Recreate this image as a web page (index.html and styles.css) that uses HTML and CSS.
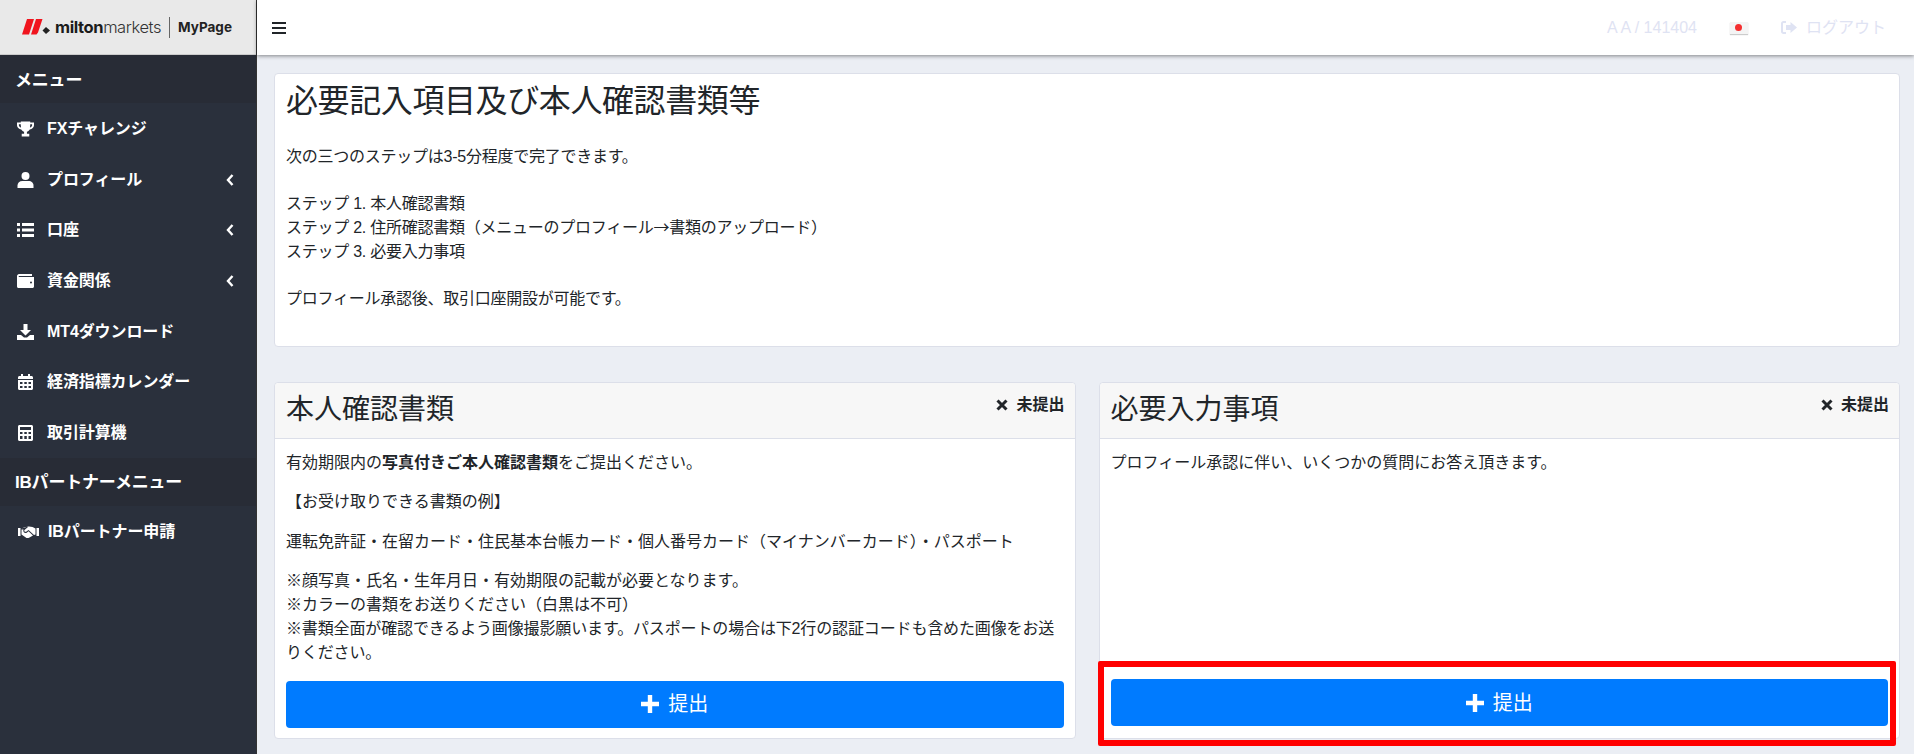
FILE: index.html
```html
<!DOCTYPE html>
<html lang="ja">
<head>
<meta charset="utf-8">
<title>MyPage</title>
<link rel="stylesheet" href="styles.css">
</head>
<body>
<div class="app">
  <aside class="sidebar">
    <div class="brand">
      <svg class="brand-mark" viewBox="0 0 28 16" width="28" height="16"><path fill="#f0141e" d="M5 0h7L7 15.500H0z M14 0h6.500l-4.500 13.500-1.500 2H9z"/><path fill="#222" d="M24 8l4 3.500-4 3.500-3.500-3.500z"/></svg>
      <span class="brand-name"><b>milton</b>markets</span>
      <span class="brand-sep"></span>
      <span class="brand-page">MyPage</span>
    </div>
    <div class="nav-head">メニュー</div>
    <ul class="nav">
      <li class="nav-item"><svg class="ico" viewBox="0 0 18 16"><path d="M4 0h10v1h4v3c0 2.500-2 4-4.500 4.500C12.800 9.800 11.500 10.500 10.500 10.800V13H13v3H5v-3h2.500v-2.200C6.500 10.500 5.200 9.800 4.500 8.500 2 8 0 6.500 0 4V1h4zM2 3v1c0 1 .8 2 2.300 2.500C4.100 5.500 4 4.300 4 3zm14 0h-2c0 1.300-.1 2.500-.3 3.500C15.200 6 16 5 16 4z"/></svg><span>FXチャレンジ</span></li>
      <li class="nav-item"><svg class="ico" viewBox="0 0 16 16"><circle cx="8" cy="4" r="4"/><path d="M5 9h6c3 0 5 2 5 4.500V16H0v-2.500C0 11 2 9 5 9z"/></svg><span>プロフィール</span><svg class="chev" viewBox="0 0 8 12"><path d="M6.500 1L2 6l4.500 5" fill="none" stroke="#fff" stroke-width="2.400"/></svg></li>
      <li class="nav-item"><svg class="ico" viewBox="0 0 17 14"><path d="M0 0h3v3H0zM5 0h12v3H5zM0 5.500h3v3H0zM5 5.500h12v3H5zM0 11h3v3H0zM5 11h12v3H5z"/></svg><span>口座</span><svg class="chev" viewBox="0 0 8 12"><path d="M6.500 1L2 6l4.500 5" fill="none" stroke="#fff" stroke-width="2.400"/></svg></li>
      <li class="nav-item"><svg class="ico" viewBox="0 0 17 14"><path d="M2 0h13v2H2c-.5 0-.5 1 0 1h15v9.500c0 .8-.7 1.500-1.500 1.500h-14C.7 14 0 13.300 0 12.500V2C0 1 1 0 2 0zm12 7.500a1 1 0 100 2 1 1 0 000-2z" fill-rule="evenodd"/></svg><span>資金関係</span><svg class="chev" viewBox="0 0 8 12"><path d="M6.500 1L2 6l4.500 5" fill="none" stroke="#fff" stroke-width="2.400"/></svg></li>
      <li class="nav-item"><svg class="ico" viewBox="0 0 17 16"><path d="M6.500 0h4v6H14l-5.500 5.500L3 6h3.500zM0 11h4l3 2.500h3l3-2.500h4v5H0z"/></svg><span>MT4ダウンロード</span></li>
      <li class="nav-item"><svg class="ico" viewBox="0 0 15 16"><path fill-rule="evenodd" d="M3 0h2v2h5V0h2v2h1.500c.8 0 1.500.7 1.500 1.500V5H0V3.500C0 2.700.7 2 1.500 2H3zM0 6h15v8.500c0 .8-.7 1.500-1.500 1.500h-12C.7 16 0 15.300 0 14.500zm2 2v2h2.500V8zm4.300 0v2h2.500V8zm4.200 0v2H13V8zM2 12v2h2.500v-2zm4.300 0v2h2.500v-2zm4.200 0v2H13v-2z"/></svg><span>経済指標カレンダー</span></li>
      <li class="nav-item"><svg class="ico" viewBox="0 0 15 16"><path fill-rule="evenodd" d="M1.500 0h12c.8 0 1.500.7 1.500 1.500v13c0 .8-.7 1.500-1.500 1.500h-12C.7 16 0 15.300 0 14.500v-13C0 .7.700 0 1.500 0zM2 2v3h11V2zm0 5v2h2.500V7zm4.300 0v2h2.500V7zm4.200 0v2H13V7zM2 11v3h2.500v-3zm4.300 0v3h2.500v-3zm4.200 0v3H13v-3z"/></svg><span>取引計算機</span></li>
    </ul>
    <div class="nav-head">IBパートナーメニュー</div>
    <ul class="nav">
      <li class="nav-item"><svg class="ico ico-wide" viewBox="0 0 21 12"><path d="M0 2h2.500v8H0zM18.500 2H21v8h-2.500zM3.500 2.500L7 1h3L6.500 4c-.7 1 .5 2.500 2 1.500L10.500 4l5.500 5 1.500-.5V2.500L14.500 1 11 .5c-1 0-2 .3-2.500.5zM3.500 3.500v5l5 3.500c1 .3 2 0 3-.5l3.500-2L10.500 5.200 9 6.500C7 8 4.500 6 5.500 3.500z"/></svg><span>IBパートナー申請</span></li>
    </ul>
  </aside>
  <div class="content">
    <header class="topbar">
      <svg class="burger" viewBox="0 0 14 12" width="14" height="12"><path d="M0 0h14v2H0zM0 5h14v2H0zM0 10h14v2H0z" fill="#212529"/></svg>
      <div class="top-right">
        <span class="account">A A / 141404</span>
        <span class="flag"><i></i></span>
        <span class="logout"><svg viewBox="0 0 16 13" width="16" height="13"><path fill="#dfe3f3" d="M5 0H2.500C1 0 0 1 0 2.500v8C0 12 1 13 2.500 13H5v-2H2.500c-.3 0-.5-.2-.5-.5v-8c0-.3.2-.5.500-.5H5zM9.500 1L16 6.500 9.500 12V9H5V4h4.500z"/></svg>ログアウト</span>
      </div>
    </header>
    <main class="main">
      <section class="card intro">
        <h1 class="intro-title">必要記入項目及び本人確認書類等</h1>
        <p class="intro-text">次の三つのステップは3-5分程度で完了できます。<br><br>ステップ 1. 本人確認書類<br>ステップ 2. 住所確認書類（メニューのプロフィール<span class="cjk">→</span>書類のアップロード）<br>ステップ 3. 必要入力事項<br><br>プロフィール承認後、取引口座開設が可能です。</p>
      </section>
      <div class="columns">
        <section class="card doc">
          <div class="doc-head">
            <h2 class="doc-title">本人確認書類</h2>
            <span class="status"><svg viewBox="0 0 12 12" width="12" height="12"><path d="M1.500 1.500l9 9M10.500 1.500l-9 9" stroke="#212529" stroke-width="3" fill="none"/></svg>未提出</span>
          </div>
          <div class="doc-body">
            <p>有効期限内の<b>写真付きご本人確認書類</b>をご提出ください。</p>
            <p>【お受け取りできる書類の例】</p>
            <p>運転免許証・在留カード・住民基本台帳カード・個人番号カード（マイナンバーカード）・パスポート</p>
            <p>※顔写真・氏名・生年月日・有効期限の記載が必要となります。<br>※カラーの書類をお送りください（白黒は不可）<br><span class="tight">※書類全面が確認できるよう画像撮影願います。パスポートの場合は下2行の認証コードも含めた画像をお送りください。</span></p>
            <a class="btn"><svg viewBox="0 0 18 18" width="18" height="18"><path d="M6.800 0h4.400v6.800H18v4.400h-6.800V18H6.800v-6.800H0V6.800h6.800z" fill="#fff"/></svg>提出</a>
          </div>
        </section>
        <section class="card doc">
          <div class="doc-head">
            <h2 class="doc-title">必要入力事項</h2>
            <span class="status"><svg viewBox="0 0 12 12" width="12" height="12"><path d="M1.500 1.500l9 9M10.500 1.500l-9 9" stroke="#212529" stroke-width="3" fill="none"/></svg>未提出</span>
          </div>
          <div class="doc-body">
            <p>プロフィール承認に伴い、いくつかの質問にお答え頂きます。</p>
            <a class="btn"><svg viewBox="0 0 18 18" width="18" height="18"><path d="M6.800 0h4.400v6.800H18v4.400h-6.800V18H6.800v-6.800H0V6.800h6.800z" fill="#fff"/></svg>提出</a>
          </div>
          <div class="highlight"></div>
        </section>
      </div>
    </main>
  </div>
</div>
</body>
</html>
```

FILE: styles.css
```css
* { box-sizing: border-box; }
html, body { margin: 0; height: 100%; overflow: hidden; }
body {
  font-family: "Liberation Sans", "Noto Sans CJK JP", sans-serif;
  font-size: 16px;
  line-height: 24px;
  color: #212529;
  background: #ebeef4;
}
.app { display: flex; height: 754px; }

.sidebar { width: 257px; flex: none; background: #2a303c; color: #fff; border-right: 1px solid #333; }
.brand { height: 55px; background: #e9e9e9; display: flex; align-items: center; padding-left: 22px; color: #222; border-bottom: 1px solid #ccc; }
.brand-mark { flex: none; }
.brand-name { font-family: "Inter", sans-serif; font-size: 16.5px; font-weight: 300; letter-spacing: -0.4px; margin-left: 5px; color: #333; }
.brand-name b { font-weight: 700; color: #1c1c1c; }
.brand-sep { width: 1px; height: 21px; background: #666; margin: 0 8px; }
.brand-page { font-family: "Inter", sans-serif; font-size: 13.5px; font-weight: 700; color: #222; }

.nav-head { height: 48px; padding: 3px 0 0 15px; background: #282c36; font-size: 17px; letter-spacing: -0.2px; font-weight: 700; display: flex; align-items: center; }
.nav { list-style: none; margin: 0; padding: 0; }
.nav-item { height: 50.7px; padding: 1px 0 0 17px; display: flex; align-items: center; font-weight: 700; letter-spacing: -0.1px; }
.ico { width: 17px; height: 16px; fill: #fff; flex: none; margin-right: 13px; }
.ico-wide { width: 21px; margin-left: 1px; margin-right: 9px; }
.chev { width: 8px; height: 12px; margin-left: auto; margin-right: 22px; }

.content { flex: 1; min-width: 0; display: flex; flex-direction: column; }
.topbar { height: 55px; flex: none; background: #fff; display: flex; align-items: center; padding-left: 15px; box-shadow: 0 1px 4px rgba(0,0,0,.45); position: relative; }
.burger { flex: none; }
.top-right { margin-left: auto; display: flex; align-items: center; color: #dfe3f3; padding-right: 28px; }
.flag { width: 18px; height: 12px; margin-left: 33px; background: #f4f4f4; box-shadow: 0 1px 1px rgba(0,0,0,.2); display: flex; align-items: center; justify-content: center; }
.flag i { width: 7px; height: 7px; border-radius: 50%; background: #f42f30; }
.logout { display: flex; align-items: center; margin-left: 33px; }
.logout svg { margin-right: 9px; }

.main { flex: 1; padding: 18px 14px 0 17px; }
.card { background: #fff; border: 1px solid #dcdfe9; border-radius: 4px; }
.intro { height: 274px; padding: 8px 11px; }
.intro-title { font-size: 32px; font-weight: 400; line-height: 38px; letter-spacing: -0.4px; margin: 0 0 25px; }
.intro-text { margin: 0; line-height: 23.7px; letter-spacing: -0.25px; }
.cjk { font-family: "Noto Sans CJK JP", sans-serif; line-height: 0; }

.columns { display: grid; grid-template-columns: 1fr 1fr; gap: 23px; margin-top: 35px; }
.doc { height: 357px; display: flex; flex-direction: column; position: relative; }
.doc-head { height: 56px; flex: none; background: #f7f7f7; border-bottom: 1px solid #dcdfe9; border-radius: 4px 4px 0 0; padding: 7px 10px 7px 11px; display: flex; justify-content: space-between; align-items: flex-start; }
.doc-title { font-size: 28px; font-weight: 400; line-height: 40px; margin: 0; }
.status { font-weight: 700; display: flex; align-items: center; gap: 8px; margin-top: 3px; }
.doc-body { flex: 1; padding: 12px 11px 12px; display: flex; flex-direction: column; }
.doc-body p { margin: 0 0 15.4px; }
.tight { letter-spacing: -0.14px; }
.btn { margin-top: auto; height: 47px; flex: none; background: #007bff; color: #fff; border-radius: 4px; display: flex; align-items: center; justify-content: center; font-size: 20px; gap: 9px; }
.highlight { position: absolute; left: -2px; right: 3px; top: 278px; height: 85px; border: 6px solid #f00; border-radius: 2px; pointer-events: none; }
```
